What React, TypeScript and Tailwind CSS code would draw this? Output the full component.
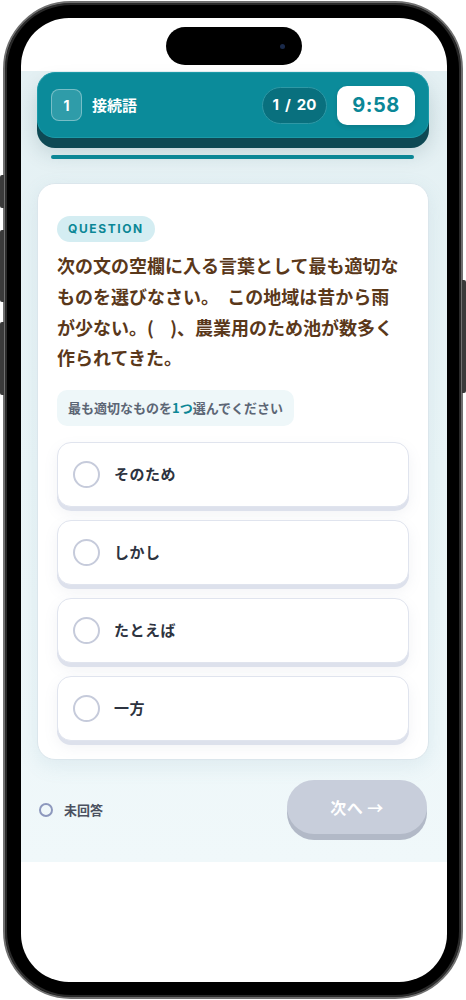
import React from "react";

const jp = { fontFamily: '"Noto Sans CJK JP", "Noto Sans", sans-serif' };
const num = { fontFamily: 'Inter, "Noto Sans CJK JP", sans-serif' };

function Option({ label }: { label: string }) {
  return (
    <div className="h-[65px] rounded-[14px] bg-white border border-[#e0e4ee] shadow-[0_4px_0_#dde1ec,0_6px_14px_rgba(120,130,160,0.10)] flex items-center pl-[15px]">
      <div className="w-[27px] h-[27px] rounded-full border-[2.5px] border-[#c6cbdb] bg-white" />
      <span className="ml-[14px] text-[15px] font-bold text-[#2d3340] tracking-[0.5px]">{label}</span>
    </div>
  );
}

export default function App() {
  return (
    <div className="w-[466px] h-[1000px] bg-white relative overflow-hidden" style={jp}>
      {/* side buttons */}
      <div className="absolute left-0 top-[175px] w-[4px] h-[33px] rounded-l-[2px] bg-[#3a3a3a]" />
      <div className="absolute left-0 top-[230px] w-[4px] h-[72px] rounded-l-[2px] bg-[#3a3a3a]" />
      <div className="absolute left-0 top-[322px] w-[4px] h-[73px] rounded-l-[2px] bg-[#3a3a3a]" />
      <div className="absolute right-0 top-[280px] w-[4px] h-[113px] rounded-r-[2px] bg-[#3a3a3a]" />

      {/* phone body */}
      <div className="ml-[3px] mt-[1px] w-[460px] h-[998px] rounded-[68px] bg-black border-[2px] border-[#707070] shadow-[inset_0_0_0_2px_#2a2a2a] pl-[16px] pr-[14px] py-[15px]">
        <div className="w-[426px] h-[964px] rounded-[48px] bg-white overflow-hidden flex flex-col">
          {/* status area with dynamic island */}
          <div className="h-[53px] shrink-0 pt-[9px] pl-[145px]">
            <div className="w-[136px] h-[38px] rounded-full bg-black flex items-center justify-end pr-[17px]">
              <div className="w-[5px] h-[5px] rounded-full bg-[#1a2a4a]" />
            </div>
          </div>

          {/* app */}
          <div className="h-[791px] shrink-0 bg-gradient-to-b from-[#e4f0f3] via-[#eaf5f7] to-[#f0f8fa] pl-[16px] pr-[18px] pt-[1px]">
            {/* header */}
            <div className="h-[66px] rounded-[18px] bg-[#0b8b9a] border border-[#1b9aa8] shadow-[0_10px_0_#0e4954,0_14px_22px_rgba(10,60,70,0.18)] flex items-center pl-[13px] pr-[13px]">
              <div className="w-[31px] h-[32px] rounded-[8px] bg-white/15 border border-white/35 flex items-center justify-center text-white text-[14px] font-bold" style={num}>
                1
              </div>
              <span className="ml-[10px] text-white text-[15px] font-bold">接続語</span>
              <div className="ml-auto h-[37px] w-[65px] rounded-full bg-[#09707e] border border-[#2f98a5] flex items-center justify-center gap-[6px] text-white text-[15px] font-bold" style={num}>
                <span>1</span>
                <span>/</span>
                <span>20</span>
              </div>
              <div className="ml-[10px] h-[39px] w-[78px] rounded-[10px] bg-white shadow-[0_2px_4px_rgba(0,0,0,0.12)] flex items-center justify-center text-[#0a8797] text-[20px] font-bold tracking-[0.5px]" style={num}>
                9:58
              </div>
            </div>

            {/* progress */}
            <div className="mt-[17px] ml-[14px] mr-[15px] h-[4px] rounded-full bg-[#0b8796]" />

            {/* main card */}
            <div className="mt-[24px] h-[577px] rounded-[18px] bg-white border border-[#dbe6ec] shadow-[0_6px_20px_rgba(100,150,170,0.12)] pt-[30px] px-[19px]">
              <div className="inline-flex h-[26px] items-center px-[11px] rounded-full bg-[#d4edf2] text-[#0b8796] text-[12px] font-bold tracking-[1.6px]" style={num}>
                QUESTION
              </div>
              <p className="mt-[8px] text-[18px] leading-[30.8px] font-bold text-[#5a381a]">
                次の文の空欄に入る言葉として最も適切な
                <br />
                ものを選びなさい。&nbsp; この地域は昔から雨
                <br />
                が少ない。(&nbsp;&nbsp;&nbsp; )、農業用のため池が数多く
                <br />
                作られてきた。
              </p>
              <div className="mt-[17px] inline-flex h-[36px] items-center px-[11px] rounded-[10px] bg-[#eef7f9] text-[13px] font-bold text-[#5c6675]">
                最も適切なものを<span className="text-[#0b8796]">1つ</span>選んでください
              </div>
              <div className="mt-[16px] flex flex-col gap-[13px]">
                <Option label="そのため" />
                <Option label="しかし" />
                <Option label="たとえば" />
                <Option label="一方" />
              </div>
            </div>

            {/* footer */}
            <div className="mt-[20px] flex items-start justify-between">
              <div className="flex items-center pl-[2px] mt-[20px]">
                <div className="w-[14px] h-[14px] rounded-full border-[2.5px] border-[#8d98bd]" />
                <span className="ml-[11px] text-[13px] font-bold text-[#4b5160]">未回答</span>
              </div>
              <div className="mr-[2px] w-[140px] h-[54px] rounded-full bg-[#c8cedb] shadow-[0_6px_0_#b2b9c7] flex items-center justify-center text-white text-[16px] font-bold tracking-[0.5px]">
                次へ →
              </div>
            </div>
          </div>
        </div>
      </div>
    </div>
  );
}
